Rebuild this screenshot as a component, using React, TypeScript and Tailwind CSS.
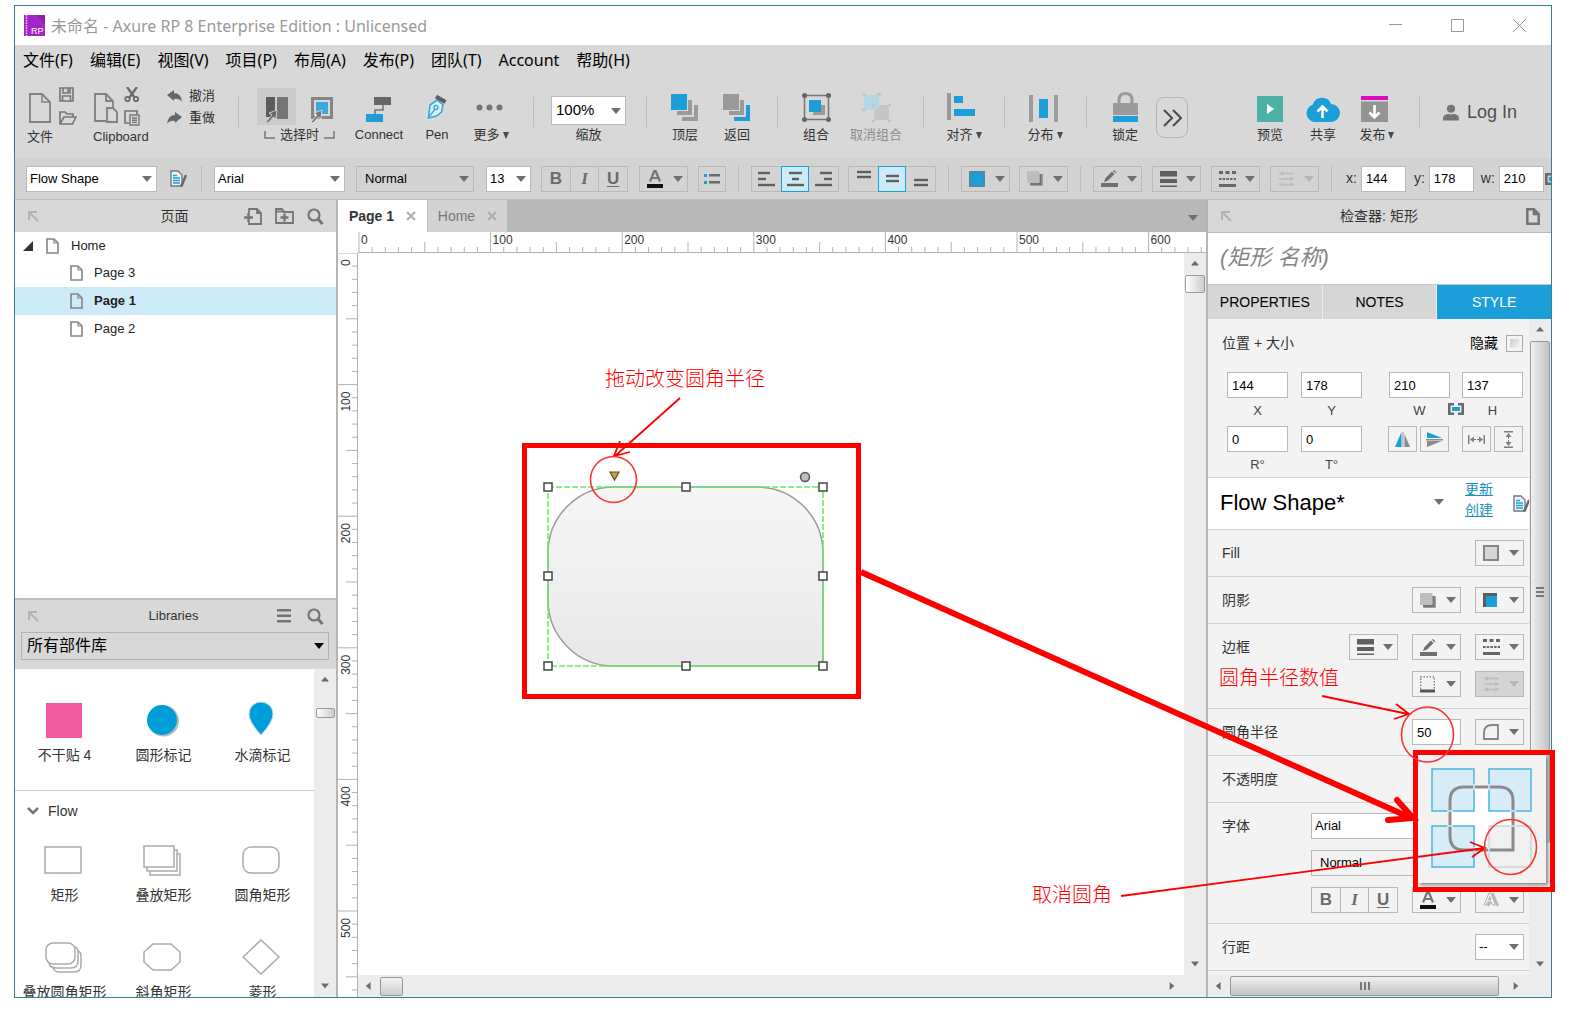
import React from "react";
import clsx from "clsx";

const menus = [
  "文件(F)",
  "编辑(E)",
  "视图(V)",
  "项目(P)",
  "布局(A)",
  "发布(P)",
  "团队(T)",
  "Account",
  "帮助(H)",
];

const pages = [
  { name: "Page 3", active: false },
  { name: "Page 1", active: true },
  { name: "Page 2", active: false },
];

const RULER_STEP = 13.16;

/* ---------- small shared pieces ---------- */

function Caret({ className = "text-[#6f6f6f]" }: { className?: string }) {
  return (
    <svg width="10" height="6" viewBox="0 0 10 6" className={clsx("shrink-0", className)}>
      <path d="M0 0h10L5 6z" fill="currentColor" />
    </svg>
  );
}

function Combo({
  label,
  value,
  className,
  white = true,
  indent = false,
}: {
  label: string;
  value: string;
  className: string;
  white?: boolean;
  indent?: boolean;
}) {
  return (
    <div
      className={clsx(
        "relative flex h-[26px] shrink-0 items-center border border-[#b9b9b9]",
        white ? "bg-white" : "bg-transparent",
        className
      )}
    >
      <select
        aria-label={label}
        className={clsx(
          "h-full w-full appearance-none bg-transparent text-[13px] text-black outline-none",
          indent ? "pl-2" : "pl-[3px]"
        )}
      >
        <option>{value}</option>
      </select>
      <div className="pointer-events-none absolute right-1">
        <Caret />
      </div>
    </div>
  );
}

function DropButton({
  label,
  disabled = false,
  filled = false,
  children,
}: {
  label: string;
  disabled?: boolean;
  filled?: boolean;
  children: React.ReactNode;
}) {
  return (
    <button
      aria-label={label}
      disabled={disabled}
      className={clsx(
        "flex h-[26px] w-[49px] shrink-0 items-center justify-between border border-[#b9b9b9] pr-1 pl-[7px]",
        filled && "bg-[#d5d5d5]"
      )}
    >
      {children}
      <Caret className={disabled ? "text-[#b5b5b5]" : "text-[#6f6f6f]"} />
    </button>
  );
}

function Separator({ className }: { className?: string }) {
  return <div className={clsx("w-px shrink-0 bg-[#bdbdbd]", className)} />;
}

function Tool({
  label,
  icon,
  className,
  muted = false,
  menu = false,
}: {
  label: string;
  icon: React.ReactNode;
  className: string;
  muted?: boolean;
  menu?: boolean;
}) {
  return (
    <button
      className={clsx(
        "flex h-[68px] shrink-0 flex-col items-center justify-end text-[13px] leading-5 whitespace-nowrap",
        muted ? "text-[#8f8f8f]" : "text-[#333]",
        className
      )}
    >
      <span className="mb-[3px] flex h-[30px] items-end">{icon}</span>
      <span className="flex items-center gap-[3px]">
        {label}
        {menu && (
          <svg width="6" height="7" viewBox="0 0 6 7">
            <path d="M0 0h6L3 7z" fill="#4a4a4a" />
          </svg>
        )}
      </span>
    </button>
  );
}

/* ---------- icons ---------- */

function PageIcon({ size = "small" }: { size?: "small" | "large" }) {
  if (size === "large") {
    return (
      <svg width="22" height="30" viewBox="0 0 22 30" fill="none" stroke="#808080" strokeWidth="1.800">
        <path d="M1 1h12l8 8v20H1z" />
        <path d="M13 1v8h8" strokeWidth="1.500" />
      </svg>
    );
  }
  return (
    <svg width="13" height="16" viewBox="0 0 13 16" fill="none" stroke="#858585" strokeWidth="1.600">
      <path d="M1 1h7l4 4v10H1z" />
      <path d="M8 1v4h4" strokeWidth="1.200" />
    </svg>
  );
}

function CollapseIcon() {
  return (
    <svg width="11" height="11" viewBox="0 0 11 11" fill="none" stroke="#b3b3b3" strokeWidth="2">
      <path d="M1 9V1h8M2 2l8 8" />
    </svg>
  );
}

function SearchIcon() {
  return (
    <svg width="17" height="17" viewBox="0 0 17 17" fill="none" stroke="#757575">
      <circle cx="7" cy="7" r="5.500" strokeWidth="2.200" />
      <path d="M11 11l4.500 5" strokeWidth="3" />
    </svg>
  );
}

function StyleIcon() {
  return (
    <svg width="17" height="17" viewBox="0 0 17 17" fill="none" className="shrink-0">
      <path d="M1 1h7l4 4v11H1z" fill="#eef6fa" stroke="#777" strokeWidth="1.400" />
      <path d="M3 5.500h4M3 8h7M3 10.500h7M3 13h7" stroke="#1c9fd9" strokeWidth="1.400" />
      <path d="M16 5l-4 10-1.500 1" stroke="#666" strokeWidth="2.400" />
    </svg>
  );
}

function FontColorIcon() {
  return (
    <svg width="16" height="18" viewBox="0 0 16 18" fill="none">
      <path d="M3 11.500L7.300 1h1.400L13 11.500M4.800 8h6.400" stroke="#757575" strokeWidth="2.200" />
      <path d="M0 14h16v4H0z" fill="#111" />
    </svg>
  );
}

function TextShadowIcon() {
  return (
    <svg width="17" height="16" viewBox="0 0 17 16" fill="none">
      <path d="M5 14L10 3l5 11M7 10h6" stroke="#b5b5b5" strokeWidth="2.600" />
      <path d="M1 13L6 1h2l4.500 12h-3L8.500 10h-4L3.500 13zM5.500 8h2.500L7 4.500z" stroke="#b0b0b0" fill="#f3f3f3" />
    </svg>
  );
}

function PenLineIcon() {
  return (
    <svg width="17" height="17" viewBox="0 0 17 17" fill="#6f6f6f">
      <path d="M0 13h17v4H0zM3 12l1.500-4L11 1.500 13.500 4 7 10.500zM12 .800l1-.800 2.300 2.300-1 1z" />
    </svg>
  );
}

function LineWidthIcon() {
  return (
    <svg width="17" height="16" viewBox="0 0 17 16" fill="#5f5f5f">
      <path d="M0 0h17v5.500H0zM0 8h17v4H0zM0 14.500h17V16H0z" />
    </svg>
  );
}

function LineStyleIcon() {
  return (
    <svg width="17" height="16" viewBox="0 0 17 16" fill="none" stroke="#666">
      <path d="M0 1.500h17" strokeWidth="3" strokeDasharray="4 2.500" />
      <path d="M0 8h17" strokeWidth="2" strokeDasharray="2.500 1.200" />
      <path d="M0 14.500h17" strokeWidth="3" />
    </svg>
  );
}

function ArrowStyleIcon() {
  return (
    <svg width="17" height="16" viewBox="0 0 17 16" fill="none" stroke="#bcbcbc" strokeWidth="1.500">
      <path d="M1 2.500h15M1 8h15M1 13.500h15M4 .500v4M13 6v4M4 11.500v4M13 11.500v4" />
    </svg>
  );
}

function OuterShadowIcon() {
  return (
    <svg width="16" height="15" viewBox="0 0 16 15">
      <rect x="3" y="3" width="13" height="12" rx="1" fill="#9d9d9d" />
      <path d="M13.500 3v10H3" fill="none" stroke="#747474" strokeWidth="2" />
      <rect width="12.500" height="12" rx="1" fill="#bdbdbd" />
    </svg>
  );
}

function InnerShadowIcon() {
  return (
    <svg width="14" height="14" viewBox="0 0 14 14">
      <rect width="14" height="14" fill="#5d5d5d" />
      <rect x="3" y="3" width="11" height="11" fill="#1c9fd9" />
    </svg>
  );
}

function FillIcon({ gray = false }: { gray?: boolean }) {
  return (
    <div
      className={clsx(
        "size-4 border-2",
        gray ? "border-[#858585] bg-[#d6d6d6]" : "border-[#4f88a3] bg-[#1c9fd9]"
      )}
    />
  );
}

function BorderSidesIcon() {
  return (
    <svg width="15" height="17" viewBox="0 0 15 17" fill="none">
      <path d="M.700 13V.800h13.600V13" stroke="#777" strokeWidth="1.300" strokeDasharray="1.500 1.500" />
      <path d="M0 15h15" stroke="#555" strokeWidth="3" />
    </svg>
  );
}

function CornerIcon() {
  return (
    <svg width="16" height="16" viewBox="0 0 16 16" fill="none" stroke="#858585" strokeWidth="1.800">
      <path d="M1 15V9q0-8 8-8h6v14z" />
    </svg>
  );
}

function LinkIcon() {
  return (
    <svg width="16" height="12" viewBox="0 0 16 12" fill="none" className="shrink-0">
      <path d="M6 1.300H1.300v9.400H6M10 1.300h4.700v9.400H10" stroke="#6a6a6a" strokeWidth="2.600" />
      <path d="M4 4h8v4H4z" fill="#1c9fd9" />
    </svg>
  );
}

function AlignIcon({ lines }: { lines: number[][] }) {
  return (
    <svg width="17" height="17" viewBox="0 0 17 17" stroke="#5f5f5f" strokeWidth="2.400">
      {lines.map(([x1, x2, y]) => (
        <path key={y} d={`M${x1} ${y}H${x2}`} />
      ))}
    </svg>
  );
}

function BiuGroup() {
  const cell = "flex flex-1 items-center justify-center text-[17px] text-[#6b6b6b]";
  return (
    <div className="flex h-[26px] w-[87px] shrink-0 divide-x divide-[#b9b9b9] border border-[#b9b9b9]">
      <button className={clsx(cell, "font-bold")}>B</button>
      <button className={clsx(cell, "font-['Liberation_Serif'] font-bold italic")}>I</button>
      <button className={clsx(cell, "font-bold underline underline-offset-2")}>U</button>
    </div>
  );
}

/* ---------- scroll bars ---------- */

function ScrollArrow({ dir }: { dir: "up" | "down" | "left" | "right" }) {
  const shapes = {
    up: "M0 7L5 1l5 6z",
    down: "M0 2h10L5 8z",
    left: "M7 0v10L1 5z",
    right: "M2 0v10l6-5z",
  };
  return (
    <button aria-label={dir} className="flex size-[22px] shrink-0 items-center justify-center">
      <svg width="8" height="8" viewBox="0 0 10 10">
        <path d={shapes[dir]} fill="#6c6c6c" />
      </svg>
    </button>
  );
}

/* ---------- top bars ---------- */

function TitleBar() {
  return (
    <header className="flex h-[39px] shrink-0 items-center bg-white pr-[25px] pl-[9px]">
      <svg width="21" height="21" viewBox="0 0 21 21">
        <rect width="21" height="21" fill="#a326c4" />
        <path d="M2.500 0v21" stroke="#e6c3f0" strokeWidth="1.500" strokeDasharray="1.500 1" />
        <path d="M12 0l9 9V0z" fill="#8d1fad" />
        <text x="7" y="19" fontSize="9" fill="#fff" fontFamily="Liberation Sans">
          RP
        </text>
      </svg>
      <h1 className="ml-[6px] font-['Noto_Sans','Noto_Sans_CJK_SC',sans-serif] text-[16px] text-[#999]">
        未命名 - Axure RP 8 Enterprise Edition : Unlicensed
      </h1>
      <div className="ml-auto flex items-center gap-[49px]">
        <button aria-label="minimize">
          <svg width="13" height="13" stroke="#999">
            <path d="M0 5.500h13" />
          </svg>
        </button>
        <button aria-label="maximize">
          <svg width="13" height="13" fill="none" stroke="#999">
            <path d="M.500 .500h12v12H.500z" />
          </svg>
        </button>
        <button aria-label="close">
          <svg width="13" height="13" stroke="#999">
            <path d="M0 0l13 13M13 0L0 13" />
          </svg>
        </button>
      </div>
    </header>
  );
}

function MenuBar() {
  return (
    <nav className="flex h-8 shrink-0 items-center gap-[17px] pb-[2px] pl-2 font-['Noto_Sans','Noto_Sans_CJK_SC',sans-serif] text-[16px] text-black">
      {menus.map((menu) => (
        <button key={menu}>{menu}</button>
      ))}
    </nav>
  );
}

function Toolbar() {
  return (
    <div className="flex h-[81px] shrink-0 items-start pr-[34px] pl-3 text-[13px] text-[#333]">
      {/* File */}
      <div className="w-[50px] shrink-0 pt-[10px]">
        <div className="flex h-[40px] gap-[8px] pl-[2px]">
          <div className="pt-[6px]">
            <PageIcon size="large" />
          </div>
          <div className="flex flex-col gap-[9px]">
            <svg width="15" height="15" viewBox="0 0 15 15" fill="none" stroke="#757575" strokeWidth="1.600">
              <path d="M1 1h13v13H1zM4 1v5h7V1M3.500 14V9h8v5M9 2v3" />
            </svg>
            <svg width="18" height="14" viewBox="0 0 18 14" fill="none" stroke="#757575" strokeWidth="1.600">
              <path d="M1 13V1h5l2 2h6v3M1 13L5 6h12l-3.500 7z" />
            </svg>
          </div>
        </div>
        <div className="leading-5">文件</div>
      </div>
      {/* Clipboard */}
      <div className="ml-4 w-[58px] shrink-0 pt-[10px]">
        <div className="flex h-[40px] gap-[6px] pl-[1px]">
          <svg
            width="24"
            height="30"
            viewBox="0 0 24 30"
            fill="none"
            stroke="#808080"
            strokeWidth="1.800"
            className="mt-[6px]"
          >
            <path d="M12 28H1V1h11l7 7v7M12 1v7h7" />
            <path d="M13 15h6l4 4v10H13z" />
          </svg>
          <div className="flex flex-col gap-[6px]">
            <svg width="16" height="16" viewBox="0 0 16 16" fill="none" stroke="#6b6b6b">
              <path d="M3 0l8 11M13 0L5 11" strokeWidth="2.400" />
              <circle cx="3.500" cy="12" r="2.200" strokeWidth="1.800" />
              <circle cx="12" cy="12" r="2.200" strokeWidth="1.800" />
            </svg>
            <svg width="16" height="17" viewBox="0 0 16 17" fill="none" stroke="#757575" strokeWidth="1.700">
              <path d="M5 14H1V2h12v3M4 2h6" />
              <path d="M6 6h9v10H6zM8 9h5M8 11.200h5M8 13.400h5" strokeWidth="1.400" />
            </svg>
          </div>
        </div>
        <div className="leading-5">Clipboard</div>
      </div>
      {/* Undo / redo */}
      <div className="ml-4 flex w-[49px] shrink-0 flex-col gap-[2px] pt-[9px]">
        <button className="flex items-center gap-[7px] leading-5 whitespace-nowrap">
          <svg width="15" height="12" viewBox="0 0 15 12" fill="#666">
            <path d="M0 5l7-5v3q7 0 8 9-3-4-8-3v2z" />
          </svg>
          撤消
        </button>
        <button className="flex items-center gap-[7px] leading-5 whitespace-nowrap">
          <svg width="15" height="12" viewBox="0 0 15 12" fill="#666">
            <path d="M15 5L8 0v3Q1 3 0 12q3-4 8-3v2z" />
          </svg>
          重做
        </button>
      </div>
      <Separator className="mt-5 ml-[22px] h-[30px]" />

      {/* Selection mode */}
      <div className="ml-[18px] w-[79px] shrink-0 pt-[11px]">
        <div className="flex">
          <button
            aria-label="intersect"
            className="flex h-[37px] w-[39px] shrink-0 items-end justify-center bg-[#cbcbcb] pb-[2px]"
          >
            <svg width="23" height="26" viewBox="0 0 23 26">
              <path d="M1 0h9v20H1z" fill="#5c5c5c" />
              <path d="M12 0h11v22H12z" fill="#757575" />
              <path d="M1 25l6-7-3-2 8-3-1 9-2.500-2L3 26z" fill="#6a6a6a" stroke="#cbcbcb" />
            </svg>
          </button>
          <button
            aria-label="contain"
            className="ml-[10px] flex h-[37px] w-[30px] shrink-0 items-end justify-center pb-[2px]"
          >
            <svg width="23" height="26" viewBox="0 0 23 26">
              <path d="M2.500 1.500h19v19h-19z" fill="none" stroke="#868686" strokeWidth="3" />
              <path d="M6 5h12v12H6z" fill="#38a9dc" />
              <path d="M1 25l6-7-3-2 8-3-1 9-2.500-2L3 26z" fill="#757575" stroke="#d8d8d8" />
            </svg>
          </button>
        </div>
        <div className="flex items-center gap-[5px] pl-[7px] leading-5 whitespace-nowrap">
          <svg width="11" height="8" fill="none" stroke="#757575" strokeWidth="1.500" className="shrink-0">
            <path d="M1 0v7h10" />
          </svg>
          选择时
          <svg width="11" height="8" fill="none" stroke="#757575" strokeWidth="1.500" className="shrink-0">
            <path d="M10 0v7H0" />
          </svg>
        </div>
      </div>
      <Tool
        className="ml-[18px] w-[50px]"
        label="Connect"
        icon={
          <svg width="26" height="25" viewBox="0 0 26 25">
            <path d="M8 0h17v8H8z" fill="#666" />
            <path d="M0 17h17v8H0z" fill="#1c9fd9" />
            <path d="M17 8v5H9v4" fill="none" stroke="#757575" strokeWidth="1.600" />
          </svg>
        }
      />
      <Tool
        className="ml-[15px] w-9"
        label="Pen"
        icon={
          <svg width="20" height="26" viewBox="0 0 20 26" fill="none" className="mb-[2px]">
            <path d="M1.500 24L3 11l7-5 6 4.500-1.500 7.500-5 4z" fill="#d9eef7" stroke="#38a9dc" strokeWidth="1.600" />
            <path d="M2 23l6-8" stroke="#38a9dc" strokeWidth="1.300" />
            <circle cx="9" cy="13.500" r="2" stroke="#38a9dc" strokeWidth="1.300" />
            <path d="M9 2.500l9.500 5.500" stroke="#5f5f5f" strokeWidth="4" />
          </svg>
        }
      />
      <Tool
        className="ml-[18px] w-9"
        label="更多"
        menu
        icon={
          <svg width="27" height="7" fill="#757575" className="mb-[11px] -ml-1">
            <circle cx="3.500" cy="3.500" r="3" />
            <circle cx="13.500" cy="3.500" r="3" />
            <circle cx="23.500" cy="3.500" r="3" />
          </svg>
        }
      />
      <Separator className="mt-5 ml-6 h-[30px]" />

      <div className="ml-[17px] flex w-[75px] shrink-0 flex-col items-center pt-[19px]">
        <div className="relative flex h-[29px] w-full items-center border border-[#b9b9b9] bg-white">
          <select id="zoom" className="w-full appearance-none bg-transparent pl-1 text-[15px] text-black outline-none">
            <option>100%</option>
          </select>
          <div className="pointer-events-none absolute right-1">
            <Caret />
          </div>
        </div>
        <label htmlFor="zoom" className="leading-5">
          缩放
        </label>
      </div>
      <Separator className="mt-5 ml-5 h-[30px]" />

      <Tool
        className="ml-3 w-[52px]"
        label="顶层"
        icon={
          <svg width="28" height="28" viewBox="0 0 28 28" fill="#9a9a9a">
            <path d="M23 11h4v16H11v-4h12z" />
            <path d="M17 6h4v15H6v-4h11z" />
            <path d="M0 0h16v16H0z" fill="#1c9fd9" />
          </svg>
        }
      />
      <Tool
        className="w-[52px]"
        label="返回"
        icon={
          <svg width="28" height="28" viewBox="0 0 28 28" fill="#9a9a9a">
            <path d="M23 11h4v16H11v-4h12z" fill="#1c9fd9" />
            <path d="M17 6h4v15H6v-4h11z" />
            <path d="M0 0h16v16H0z" />
          </svg>
        }
      />
      <Separator className="mt-5 ml-[14px] h-[30px]" />

      <Tool
        className="ml-3 w-[52px]"
        label="组合"
        icon={
          <svg width="29" height="29" viewBox="0 0 29 29">
            <path d="M13 12h10v10H11z" fill="#9a9a9a" />
            <path d="M7 7h12v12H7z" fill="#1c9fd9" />
            <path d="M2.500 2.500h24v24h-24z" fill="none" stroke="#757575" strokeWidth="1.500" />
            <g fill="#666">
              <circle cx="2.500" cy="2.500" r="2.500" />
              <circle cx="26.500" cy="2.500" r="2.500" />
              <circle cx="2.500" cy="26.500" r="2.500" />
              <circle cx="26.500" cy="26.500" r="2.500" />
            </g>
          </svg>
        }
      />
      <Tool
        className="ml-[4px] w-[60px]"
        label="取消组合"
        muted
        icon={
          <svg width="29" height="29" viewBox="0 0 29 29">
            <path d="M12 12h15v15H12z" fill="#c6c6c6" />
            <path d="M2 2h15v15H2z" fill="#b4d6e5" />
            <path
              d="M0 1h3M15 1h4M0 17h3M15 17h4M10 12h3M26 12h3M10 28h3M26 28h3"
              stroke="#c4c4c4"
              strokeWidth="3"
            />
          </svg>
        }
      />
      <Separator className="mt-5 ml-[17px] h-[30px]" />

      <Tool
        className="ml-[22px] w-9"
        label="对齐"
        menu
        icon={
          <svg width="34" height="29" viewBox="0 0 34 29">
            <path d="M0 0h4v27H0z" fill="#9a9a9a" />
            <path d="M7 3h9v7H7zM7 16h21v7H7z" fill="#1c9fd9" />
          </svg>
        }
      />
      <Separator className="mt-5 ml-[22px] h-[30px]" />
      <Tool
        className="ml-[22px] w-9"
        label="分布"
        menu
        icon={
          <svg width="33" height="27" viewBox="0 0 33 27">
            <path d="M0 0h4v27H0zM25 0h4v27h-4z" fill="#9a9a9a" />
            <path d="M10 4h9v19h-9z" fill="#1c9fd9" />
          </svg>
        }
      />
      <Separator className="mt-5 ml-[23px] h-[30px]" />
      <Tool
        className="ml-5 w-9"
        label="锁定"
        icon={
          <svg width="25" height="30" viewBox="0 0 25 30">
            <path d="M6 12V8q0-6.500 6.500-6.500T19 8v4" fill="none" stroke="#9a9a9a" strokeWidth="3" />
            <path d="M0 11h25v12H0z" fill="#9a9a9a" />
            <path d="M0 24h25v6H0z" fill="#1c9fd9" />
          </svg>
        }
      />
      <button
        aria-label="more tools"
        className="mt-5 ml-[13px] flex h-[41px] w-8 shrink-0 items-center justify-center rounded-lg border border-[#b5b5b5]"
      >
        <svg width="19" height="18" viewBox="0 0 19 18" fill="none" stroke="#4a4a4a" strokeWidth="2">
          <path d="M1 1l8 8-8 8M10 1l8 8-8 8" />
        </svg>
      </button>

      <div className="ml-auto flex">
        <Tool
          className="w-9"
          label="预览"
          icon={
            <svg width="26" height="26" viewBox="0 0 26 26">
              <path d="M0 0h26v26H0z" fill="#4bb0a5" />
              <path d="M10 8l7 5-7 5z" fill="#fff" />
            </svg>
          }
        />
        <Tool
          className="ml-[17px] w-9"
          label="共享"
          icon={
            <svg width="35" height="26" viewBox="0 0 35 26">
              <path d="M9 26a9 9 0 0 1-1-17.500A9.500 9.500 0 0 1 26 8a9 9 0 0 1 0 18z" fill="#1c9fd9" />
              <path d="M17.500 22V11M12.500 15.500l5-5 5 5" fill="none" stroke="#fff" strokeWidth="2.600" />
            </svg>
          }
        />
        <Tool
          className="ml-[18px] w-9"
          label="发布"
          menu
          icon={
            <svg width="31" height="26" viewBox="0 0 31 26">
              <path d="M0 0h27v4H0z" fill="#dc0cc0" />
              <path d="M0 5.500h27V26H0z" fill="#949494" />
              <path d="M13.500 9v12M8.500 16.500l5 5 5-5" fill="none" stroke="#fff" strokeWidth="2.600" />
            </svg>
          }
        />
        <Separator className="mt-5 ml-[24px] h-[30px]" />
        <button className="mt-[23px] ml-[23px] flex h-6 items-center gap-2 text-[18px] whitespace-nowrap text-[#4f4f4f]">
          <svg width="16" height="17" viewBox="0 0 17 17" fill="#757575">
            <circle cx="8.500" cy="4.500" r="4.300" />
            <path d="M0 17v-3q1-4 6-4 2.500 1 5 0 5 0 6 4v3z" />
          </svg>
          Log In
        </button>
      </div>
    </div>
  );
}

const hAlign = [
  [[0, 12, 3], [0, 8, 9], [0, 17, 15]],
  [[2, 15, 3], [5, 12, 9], [0, 17, 15]],
  [[5, 17, 3], [9, 17, 9], [0, 17, 15]],
];
const vAlign = [
  [[2, 16, 2], [2, 16, 7]],
  [[2, 15, 6], [2, 15, 11]],
  [[2, 16, 10], [2, 16, 15]],
];

function AlignGroup({ label, items }: { label: string; items: number[][][] }) {
  return (
    <div role="group" aria-label={label} className="flex h-[26px] w-[88px] shrink-0 border border-[#b9b9b9]">
      {items.map((lines, index) => (
        <button
          key={index}
          aria-label={`${label} ${index + 1}`}
          className={clsx(
            "-my-px flex flex-1 items-center justify-center border",
            index === 1 ? "border-[#1c9fd9] bg-[#cceaf7]" : "border-transparent"
          )}
        >
          <AlignIcon lines={lines} />
        </button>
      ))}
    </div>
  );
}

function Coord({ id, value, className }: { id: string; value: string; className: string }) {
  return (
    <div className={clsx("flex shrink-0 items-center gap-1 text-[14px]", className)}>
      <label htmlFor={`bar-${id}`}>{id}:</label>
      <input
        id={`bar-${id}`}
        defaultValue={value}
        className="h-[26px] w-[45px] border border-[#b9b9b9] bg-white pl-1 text-[13px] text-black"
      />
    </div>
  );
}

function FormatBar() {
  return (
    <div className="flex h-[41px] shrink-0 items-center overflow-hidden bg-[#d3d3d3] pl-[11px] text-[#333]">
      <Combo label="widget style" value="Flow Shape" className="w-[131px]" />
      <button aria-label="style manager" className="ml-[13px]">
        <StyleIcon />
      </button>
      <Separator className="ml-[14px] h-[26px]" />
      <Combo label="font" value="Arial" className="ml-[12px] w-[131px]" />
      <Combo label="font weight" value="Normal" className="ml-[11px] w-[118px]" white={false} indent />
      <Combo label="font size" value="13" className="ml-3 w-[45px]" />
      <div className="ml-[10px]">
        <BiuGroup />
      </div>
      <div className="ml-[11px]">
        <DropButton label="font color">
          <FontColorIcon />
        </DropButton>
      </div>
      <button
        aria-label="bullets"
        className="ml-[10px] flex h-[26px] w-[28px] shrink-0 items-center justify-center border border-[#b9b9b9]"
      >
        <svg width="16" height="12" viewBox="0 0 16 12">
          <path d="M0 1h3v3H0zM0 8h3v3H0z" fill="#1c9fd9" />
          <path d="M5 1h11v2.500H5zM5 8h11v2.500H5z" fill="#6b6b6b" />
        </svg>
      </button>
      <Separator className="ml-3 h-[26px]" />
      <div className="ml-3 flex gap-[9px]">
        <AlignGroup label="horizontal align" items={hAlign} />
        <AlignGroup label="vertical align" items={vAlign} />
      </div>
      <Separator className="ml-3 h-[26px]" />
      <div className="ml-3 flex gap-[9px]">
        <DropButton label="fill color">
          <FillIcon />
        </DropButton>
        <DropButton label="shadow">
          <OuterShadowIcon />
        </DropButton>
      </div>
      <Separator className="ml-3 h-[26px]" />
      <div className="ml-3 flex gap-[10px]">
        <DropButton label="line color">
          <PenLineIcon />
        </DropButton>
        <DropButton label="line width">
          <LineWidthIcon />
        </DropButton>
        <DropButton label="line style">
          <LineStyleIcon />
        </DropButton>
        <DropButton label="arrow style" disabled>
          <ArrowStyleIcon />
        </DropButton>
      </div>
      <Separator className="ml-3 h-[26px]" />
      <Coord id="x" value="144" className="ml-[14px]" />
      <Coord id="y" value="178" className="ml-2" />
      <Coord id="w" value="210" className="ml-[7px]" />
      <div className="ml-px">
        <LinkIcon />
      </div>
    </div>
  );
}

/* ---------- left side ---------- */

function PagesPanel() {
  return (
    <section className="flex h-[398px] shrink-0 flex-col bg-white">
      <div className="flex h-8 shrink-0 items-center bg-[#d8d8d8] pr-3 pl-[13px]">
        <CollapseIcon />
        <h2 className="flex-1 pl-[66px] text-center text-[14px]">页面</h2>
        <div className="flex items-center gap-[13px]">
          <svg width="18" height="17" viewBox="0 0 18 17" fill="none" stroke="#757575" strokeWidth="1.800">
            <path d="M5 5V1h8l4 4v11H5v-2M13 1v4h4" />
            <path d="M0 9.500h9M4.500 5v9" strokeWidth="2.500" />
          </svg>
          <svg width="19" height="16" viewBox="0 0 19 16" fill="none" stroke="#757575" strokeWidth="1.800">
            <path d="M1 15V1h6l2 3h9v11z" />
            <path d="M1 3.500h8" />
            <path d="M5.500 9.500h8M9.500 5.500v8" strokeWidth="2.500" />
          </svg>
          <SearchIcon />
        </div>
      </div>
      <ul className="text-[13px] text-[#222]">
        <li className="flex h-[27px] items-center pl-2">
          <svg width="10" height="10">
            <path d="M10 0v10H0z" fill="#333" />
          </svg>
          <span className="mr-3 ml-[13px]">
            <PageIcon />
          </span>
          Home
        </li>
        {pages.map((page) => (
          <li
            key={page.name}
            className={clsx(
              "flex h-7 items-center gap-[11px] pl-[55px]",
              page.active && "bg-[#cceaf7] font-bold"
            )}
          >
            <PageIcon />
            {page.name}
          </li>
        ))}
      </ul>
    </section>
  );
}

const outline = { fill: "none", stroke: "#ababab", strokeWidth: 1.5 };

const markers = [
  {
    name: "不干贴 4",
    icon: (
      <svg width="38" height="36">
        <path d="M0 1h36v35H0z" fill="#f05a9f" />
      </svg>
    ),
  },
  {
    name: "圆形标记",
    icon: (
      <svg width="36" height="36">
        <circle cx="17.500" cy="19" r="15.500" fill="#bbb" />
        <circle cx="16" cy="18" r="15" fill="#009ddb" />
      </svg>
    ),
  },
  {
    name: "水滴标记",
    icon: (
      <svg width="30" height="36">
        <path d="M13 33Q1 20 1 12a12 12 0 0 1 24 0q0 8-12 21z" fill="#009ddb" stroke="#b9dcea" />
      </svg>
    ),
  },
];

const flowShapes = [
  {
    name: "矩形",
    icon: (
      <svg width="41" height="36" {...outline}>
        <path d="M1 5h36v26H1z" />
      </svg>
    ),
  },
  {
    name: "叠放矩形",
    icon: (
      <svg width="41" height="36" {...outline}>
        <path d="M1 4h30v21H1zM4 25v4h30V8h-3M7 29v4h30V12h-3" />
      </svg>
    ),
  },
  {
    name: "圆角矩形",
    icon: (
      <svg width="41" height="36" {...outline}>
        <rect x="1" y="5" width="36" height="26" rx="8" />
      </svg>
    ),
  },
  {
    name: "叠放圆角矩形",
    icon: (
      <svg width="41" height="36" {...outline}>
        <rect x="2" y="4" width="29" height="21" rx="7" />
        <path d="M5 24q1 5 7 5h15q7 0 7-7v-9q0-4-3-5M9 29q2 4 6 4h15q7 0 7-7v-9q0-4-3-5" />
      </svg>
    ),
  },
  {
    name: "斜角矩形",
    icon: (
      <svg width="41" height="36" {...outline}>
        <path d="M10 5h18l9 8v10l-9 8H10l-9-8V13z" />
      </svg>
    ),
  },
  {
    name: "菱形",
    icon: (
      <svg width="41" height="36" {...outline}>
        <path d="M19 1l18 17-18 17L1 18z" />
      </svg>
    ),
  },
];

function WidgetCell({ name, icon }: { name: string; icon: React.ReactNode }) {
  return (
    <div className="flex h-[97px] flex-col items-center pt-[11px]">
      {icon}
      <span className="mt-[7px] text-[14px] leading-5 whitespace-nowrap text-[#333]">{name}</span>
    </div>
  );
}

function LibrariesPanel() {
  return (
    <section className="flex min-h-0 flex-1 flex-col border-t-2 border-[#bdbdbd] bg-white">
      <div className="shrink-0 bg-[#d8d8d8] pb-[9px]">
        <div className="flex h-8 items-center pr-3 pl-[13px]">
          <CollapseIcon />
          <h2 className="flex-1 pl-[31px] text-center text-[13px]">Libraries</h2>
          <div className="flex items-center gap-[16px]">
            <svg width="14" height="14" fill="#757575">
              <path d="M0 0h14v2.500H0zM0 5.500h14V8H0zM0 11h14v2.500H0z" />
            </svg>
            <SearchIcon />
          </div>
        </div>
        <div className="relative mr-[7px] ml-[6px] flex h-[28px] items-center border border-[#b3b3b3]">
          <select
            aria-label="library"
            className="h-full w-full appearance-none bg-transparent pl-[5px] text-[16px] text-black outline-none"
          >
            <option>所有部件库</option>
          </select>
          <div className="pointer-events-none absolute right-1">
            <Caret className="text-black" />
          </div>
        </div>
      </div>
      <div className="flex min-h-0 flex-1">
        <div className="min-w-0 flex-1 overflow-hidden">
          <div className="grid h-[122px] grid-cols-3 border-b border-[#ccc] pt-[22px] pr-[2px]">
            {markers.map((item) => (
              <WidgetCell key={item.name} {...item} />
            ))}
          </div>
          <div className="flex h-10 items-center gap-[9px] pl-3 text-[14px] text-[#333]">
            <svg width="12" height="8" viewBox="0 0 12 8" fill="none" stroke="#777" strokeWidth="2.500">
              <path d="M1 1l5 5 5-5" />
            </svg>
            Flow
          </div>
          <div className="grid grid-cols-3 pr-[2px]">
            {flowShapes.map((item) => (
              <WidgetCell key={item.name} {...item} />
            ))}
          </div>
        </div>
        <div className="flex w-[22px] shrink-0 flex-col items-center bg-[#ececec]">
          <ScrollArrow dir="up" />
          <div className="mt-[17px] h-[10px] w-[19px] rounded-xs border border-[#999] bg-linear-to-r from-white to-[#ccc]" />
          <div className="mt-auto">
            <ScrollArrow dir="down" />
          </div>
        </div>
      </div>
    </section>
  );
}

/* ---------- canvas ---------- */

function HorizontalRuler() {
  return (
    <svg className="h-full w-full" stroke="#b3b3b3">
      {Array.from({ length: 70 }, (_, i) => {
        const x = 1 + i * RULER_STEP;
        const top = i % 10 === 0 ? 0 : i % 5 === 0 ? 10 : 15;
        return (
          <g key={i}>
            <path d={`M${x} ${top}V20`} />
            {i % 10 === 0 && (
              <text x={x + 2} y="12" fontSize="12" fill="#333" stroke="none">
                {i * 10}
              </text>
            )}
          </g>
        );
      })}
    </svg>
  );
}

function VerticalRuler() {
  return (
    <svg className="h-full w-full" stroke="#b3b3b3">
      {Array.from({ length: 60 }, (_, i) => {
        const y = i * RULER_STEP;
        const left = i % 10 === 0 ? 0 : i % 5 === 0 ? 8 : 14;
        const width = String(i * 10).length * 7;
        return (
          <g key={i}>
            <path d={`M${left} ${y}H19`} />
            {i % 10 === 0 && (
              <text
                transform={`translate(12 ${y + 6 + width}) rotate(-90)`}
                fontSize="12"
                fill="#333"
                stroke="none"
              >
                {i * 10}
              </text>
            )}
          </g>
        );
      })}
    </svg>
  );
}

const handles = [
  [6, 21],
  [144, 21],
  [281, 21],
  [6, 110],
  [281, 110],
  [6, 200],
  [144, 200],
  [281, 200],
];

function SelectedShape() {
  return (
    <svg width="288" height="208" viewBox="0 0 288 208" className="absolute top-[213px] left-[184px]" fill="none">
      <defs>
        <linearGradient id="shape-fill" x1="0" y1="0" x2="0" y2="1">
          <stop offset="0" stopColor="#f6f6f6" />
          <stop offset="1" stopColor="#e8e8e8" />
        </linearGradient>
      </defs>
      <path
        d="M6 87a66 66 0 0 1 66-66h143a66 66 0 0 1 66 66v113H72a66 66 0 0 1-66-66z"
        fill="url(#shape-fill)"
        stroke="#9b9b9b"
        strokeWidth="1.500"
      />
      <path d="M6 21h275v179H6z" stroke="#5cf05c" strokeWidth="1.500" strokeDasharray="6 2" />
      {handles.map(([x, y]) => (
        <rect key={`${x}-${y}`} x={x - 4} y={y - 4} width="8" height="8" fill="#fff" stroke="#444" strokeWidth="1.500" />
      ))}
      <path d="M68 6h9l-4.500 8z" fill="#d3a52b" stroke="#5a5030" strokeWidth="1.200" />
      <circle cx="263" cy="11" r="4.500" fill="#bdbdbd" stroke="#555" strokeWidth="1.500" />
    </svg>
  );
}

function CloseMark() {
  return (
    <svg width="10" height="10" viewBox="0 0 10 10" stroke="#b0b0b0" strokeWidth="2.200">
      <path d="M1 1l8 8M9 1L1 9" />
    </svg>
  );
}

function Canvas() {
  return (
    <main className="flex min-w-0 flex-1 flex-col bg-white">
      <div className="flex h-8 shrink-0 bg-[#b8b8b8] text-[14px]">
        <button className="flex w-[89px] items-center justify-center gap-3 bg-white font-bold whitespace-nowrap text-[#333]">
          Page 1
          <CloseMark />
        </button>
        <button className="flex w-20 items-center justify-center gap-3 border-l border-[#c4c4c4] bg-[#d3d3d3] text-[#777]">
          Home
          <CloseMark />
        </button>
        <button aria-label="open tabs" className="mr-2 ml-auto pt-1">
          <Caret />
        </button>
      </div>
      <div className="flex min-h-0 flex-1">
        <div className="flex w-5 shrink-0 flex-col">
          <div className="h-[21px] shrink-0" />
          <div className="min-h-0 flex-1 border-r border-[#b3b3b3]">
            <VerticalRuler />
          </div>
        </div>
        <div className="flex min-w-0 flex-1 flex-col">
          <div className="h-[21px] shrink-0 border-b border-[#b3b3b3]">
            <HorizontalRuler />
          </div>
          <div className="flex min-h-0 flex-1">
            <div className="relative min-w-0 flex-1 overflow-hidden">
              <SelectedShape />
            </div>
            <div className="flex w-[22px] shrink-0 flex-col items-center bg-[#ececec]">
              <ScrollArrow dir="up" />
              <div className="h-[18px] w-5 rounded-xs border border-[#999] bg-linear-to-r from-white to-[#ccc]" />
              <div className="mt-auto">
                <ScrollArrow dir="down" />
              </div>
            </div>
          </div>
          <div className="flex h-[22px] shrink-0 items-center bg-[#ececec] pr-[23px]">
            <ScrollArrow dir="left" />
            <div className="h-[19px] w-[23px] rounded-xs border border-[#999] bg-linear-to-b from-[#f4f4f4] to-[#ccc]" />
            <div className="ml-auto">
              <ScrollArrow dir="right" />
            </div>
          </div>
        </div>
      </div>
    </main>
  );
}

/* ---------- inspector ---------- */

function NumberField({ id, label, value }: { id: string; label: string; value: string }) {
  return (
    <div className="flex w-[61px] flex-col items-center text-[13px] text-[#444]">
      <input
        id={id}
        defaultValue={value}
        className="h-[26px] w-full border border-[#b9b9b9] bg-white pl-1 text-[13px] text-black"
      />
      <label htmlFor={id} className="h-7 leading-[26px]">
        {label}
      </label>
    </div>
  );
}

function SquareButton({ label, children }: { label: string; children: React.ReactNode }) {
  return (
    <button aria-label={label} className="flex h-[26px] w-[29px] items-center justify-center border border-[#b9b9b9]">
      {children}
    </button>
  );
}

function Row({ label, className, children }: { label: string; className?: string; children?: React.ReactNode }) {
  return (
    <div
      className={clsx(
        "flex shrink-0 items-start justify-between border-t border-[#d2d2d2] pt-[10px] pr-[5px] pl-[14px]",
        className ?? "h-[47px]"
      )}
    >
      <span className="text-[14px] leading-[26px] text-[#333]">{label}</span>
      {children}
    </div>
  );
}

function Inspector() {
  return (
    <aside className="flex w-[345px] shrink-0 flex-col border-l-2 border-[#b5b5b5] bg-[#f3f3f3]">
      <div className="flex h-[33px] shrink-0 items-center border-b border-[#b9b9b9] bg-[#d8d8d8] pr-[11px] pl-[13px]">
        <CollapseIcon />
        <h2 className="flex-1 text-center text-[14px] text-[#333]">检查器: 矩形</h2>
        <svg width="14" height="17" viewBox="0 0 14 17" fill="none" stroke="#757575" strokeWidth="2.500">
          <path d="M1.300 1.300H8l4.700 4.700v9.700H1.300zM8 1v5h5" />
        </svg>
      </div>
      <input
        aria-label="widget name"
        placeholder="(矩形 名称)"
        className="h-[51px] w-full shrink-0 bg-white pb-[2px] pl-3 text-[22px] italic outline-none placeholder:text-[#858585]"
      />
      <div className="grid h-[35px] shrink-0 grid-cols-3 gap-px border-t border-[#c4c4c4] bg-[#eee] text-[14px]">
        <button className="bg-[#d6d6d6]">PROPERTIES</button>
        <button className="bg-[#d6d6d6]">NOTES</button>
        <button className="bg-[#1c9fd9] text-white">STYLE</button>
      </div>
      <div className="flex min-h-0 flex-1">
        <div className="flex min-w-0 flex-1 flex-col overflow-hidden">
          <div className="h-[158px] shrink-0 pt-[14px] pr-[6px] pl-[14px]">
            <div className="flex h-5 items-center justify-between text-[14px] text-[#333]">
              <span>位置 + 大小</span>
              <label className="flex items-center gap-2 text-black">
                隐藏
                <input
                  type="checkbox"
                  className="size-[17px] appearance-none border border-[#aaa] bg-linear-to-br from-[#b9c1ca] to-white shadow-[inset_0_0_0_3px_#f3f3f3]"
                />
              </label>
            </div>
            <div className="mt-[19px] flex pl-[5px]">
              <div className="flex gap-[13px]">
                <NumberField id="pos-x" label="X" value="144" />
                <NumberField id="pos-y" label="Y" value="178" />
              </div>
              <div className="ml-auto flex">
                <NumberField id="size-w" label="W" value="210" />
                <button aria-label="keep ratio" className="-mx-[2px] mt-[31px] h-3">
                  <LinkIcon />
                </button>
                <NumberField id="size-h" label="H" value="137" />
              </div>
            </div>
            <div className="flex pl-[5px]">
              <div className="flex gap-[13px]">
                <NumberField id="rotate" label="R°" value="0" />
                <NumberField id="text-rotate" label="T°" value="0" />
              </div>
              <div className="ml-auto flex gap-[13px]">
                <div className="flex gap-[3px]">
                  <SquareButton label="flip horizontal">
                    <svg width="16" height="15">
                      <path d="M6.500 0v15H0z" fill="#1c9fd9" />
                      <path d="M9.500 2v13H15z" fill="#8a8a8a" />
                      <path d="M8 0v15" stroke="#999" />
                    </svg>
                  </SquareButton>
                  <SquareButton label="flip vertical">
                    <svg width="17" height="15">
                      <path d="M1 0v6h15z" fill="#1c9fd9" />
                      <path d="M1 9v6l15-6zM0 7h17v1.500H0z" fill="#8a8a8a" />
                    </svg>
                  </SquareButton>
                </div>
                <div className="flex gap-[3px]">
                  <SquareButton label="fit width">
                    <svg width="17" height="9" fill="#7d7d7d">
                      <path d="M0 0h1.500v9H0zM15.500 0H17v9h-1.500zM2 4.500L6 1.500v6zM15 4.500l-4-3v6zM6 4h2v1H6zM9 4h2v1H9z" />
                    </svg>
                  </SquareButton>
                  <SquareButton label="fit height">
                    <svg width="9" height="17" fill="#7d7d7d">
                      <path d="M0 0h9v1.500H0zM0 15.500h9V17H0zM4.500 2l3 4h-6zM4.500 15l3-4h-6zM4 6h1v2H4zM4 9h1v2H4z" />
                    </svg>
                  </SquareButton>
                </div>
              </div>
            </div>
          </div>

          <div className="flex h-[52px] shrink-0 items-center border-t border-[#d2d2d2] bg-white pl-3">
            <div className="relative flex w-[224px] shrink-0 items-center pb-[3px]">
              <select
                aria-label="style name"
                className="w-full appearance-none bg-transparent text-[22px] text-black outline-none"
              >
                <option>Flow Shape*</option>
              </select>
              <div className="pointer-events-none absolute right-0">
                <Caret />
              </div>
            </div>
            <div className="ml-[21px] flex shrink-0 flex-col pb-[7px] text-[14px] leading-[21px] whitespace-nowrap text-[#1c8fc0] underline">
              <a href="#update">更新</a>
              <a href="#create">创建</a>
            </div>
            <button aria-label="style manager" className="ml-5 shrink-0">
              <StyleIcon />
            </button>
          </div>

          <Row label="Fill">
            <DropButton label="fill">
              <FillIcon gray />
            </DropButton>
          </Row>
          <Row label="阴影">
            <div className="flex gap-[14px]">
              <DropButton label="outer shadow">
                <OuterShadowIcon />
              </DropButton>
              <DropButton label="inner shadow">
                <InnerShadowIcon />
              </DropButton>
            </div>
          </Row>
          <Row label="边框" className="h-[85px]">
            <div className="flex w-[175px] flex-wrap justify-end gap-x-[14px] gap-y-[11px]">
              <DropButton label="border width">
                <LineWidthIcon />
              </DropButton>
              <DropButton label="border color">
                <PenLineIcon />
              </DropButton>
              <DropButton label="border style">
                <LineStyleIcon />
              </DropButton>
              <DropButton label="border sides">
                <BorderSidesIcon />
              </DropButton>
              <DropButton label="border arrows" disabled filled>
                <ArrowStyleIcon />
              </DropButton>
            </div>
          </Row>
          <Row label="圆角半径">
            <div className="flex gap-[14px]">
              <input
                aria-label="corner radius"
                defaultValue="50"
                className="h-[26px] w-[49px] border border-[#b9b9b9] bg-white pl-1 text-[13px] text-black"
              />
              <DropButton label="corner visibility">
                <CornerIcon />
              </DropButton>
            </div>
          </Row>
          <Row label="不透明度" />
          <Row label="字体" className="h-[121px]">
            <div className="flex w-[213px] flex-col gap-[11px]">
              <Combo label="font family" value="Arial" className="w-full" />
              <Combo label="typeface" value="Normal" className="w-full" white={false} indent />
              <div className="flex justify-between">
                <BiuGroup />
                <div className="flex gap-[14px]">
                  <DropButton label="text color">
                    <FontColorIcon />
                  </DropButton>
                  <DropButton label="text shadow">
                    <TextShadowIcon />
                  </DropButton>
                </div>
              </div>
            </div>
          </Row>
          <Row label="行距">
            <Combo label="line spacing" value="--" className="w-[49px]" />
          </Row>
          <div className="flex-1 border-t border-[#d2d2d2]" />
          <div className="flex h-[22px] shrink-0 items-center bg-[#ececec]">
            <ScrollArrow dir="left" />
            <div className="flex h-5 flex-1 items-center justify-center gap-[2px] rounded-xs border border-[#999] bg-linear-to-b from-[#f0f0f0] to-[#c2c2c2]">
              <div className="h-2 w-[2px] bg-[#777]" />
              <div className="h-2 w-[2px] bg-[#777]" />
              <div className="h-2 w-[2px] bg-[#777]" />
            </div>
            <div className="pr-[2px] pl-[6px]">
              <ScrollArrow dir="right" />
            </div>
          </div>
        </div>
        <div className="flex w-[22px] shrink-0 flex-col items-center bg-[#ececec] pb-[22px]">
          <ScrollArrow dir="up" />
          <div className="flex h-[502px] w-5 flex-col items-center justify-center gap-[2px] rounded-xs border border-[#999] bg-linear-to-r from-[#f0f0f0] to-[#c2c2c2]">
            <div className="h-[2px] w-2 bg-[#777]" />
            <div className="h-[2px] w-2 bg-[#777]" />
            <div className="h-[2px] w-2 bg-[#777]" />
          </div>
          <div className="mt-auto">
            <ScrollArrow dir="down" />
          </div>
        </div>
      </div>
    </aside>
  );
}

/* ---------- notes drawn over the window ---------- */

function CornerPicker() {
  return (
    <div className="absolute top-[750px] left-[1413px] size-[142px] border-5 border-[#f00]">
      <div className="h-[128px] w-[128px] bg-[#f2f2f2] shadow-[2px_2px_3px_#888]">
        <svg width="128" height="128" viewBox="0 0 128 128" fill="none">
          <path d="M33 33h61v61H33z" fill="#fff" />
          <g fill="#d6edf7" stroke="#4db5e0" strokeWidth="1.500">
            <path d="M14 14h42v42H14zM71 14h42v42H71zM14 71h42v41H14z" />
          </g>
          <path d="M71 71h42v41H71z" fill="#f0f0f0" stroke="#d2d2d2" strokeWidth="1.500" />
          <path d="M32 46q0-14 14-14h35q14 0 14 14v49H46q-14 0-14-14z" stroke="#8b8b8b" strokeWidth="3" />
          <path d="M56 29v6M71 29v6M56 92v6M71 92v6M29 56h6M29 71h6M92 56h6M92 71h6" stroke="#dfeef5" strokeWidth="1.500" />
        </svg>
      </div>
    </div>
  );
}

function Annotations() {
  const note =
    "absolute font-['Noto_Sans_CJK_SC',sans-serif] text-[20px] leading-6 font-light whitespace-nowrap text-[#f00]";
  return (
    <div className="pointer-events-none absolute inset-0">
      <CornerPicker />
      <svg className="absolute inset-0 h-full w-full" fill="none" stroke="#f00">
        <path d="M524.500 445.500h334v251h-334z" strokeWidth="5" />
        <path d="M861 572l550 246" strokeWidth="6" />
        <path d="M1397 800l16 18-25 2" strokeWidth="6" strokeLinecap="round" />
        <g strokeWidth="1.800">
          <path d="M680 398l-65 58M620 441l-6 15 16-4" />
          <path d="M1322 696l86 18M1396 704l13 10-15 5" />
          <path d="M1121 896l364-48M1470 842l15 6-13 9" />
        </g>
        <g stroke="#ff3030" strokeWidth="1.600">
          <circle cx="613.500" cy="479.500" r="23" />
          <ellipse cx="1427.500" cy="734.500" rx="26" ry="27.500" />
          <ellipse cx="1510.500" cy="847" rx="26" ry="27.500" />
        </g>
      </svg>
      <span className={clsx(note, "top-[366px] left-[605px]")}>拖动改变圆角半径</span>
      <span className={clsx(note, "top-[665px] left-[1219px]")}>圆角半径数值</span>
      <span className={clsx(note, "top-[882px] left-[1032px]")}>取消圆角</span>
    </div>
  );
}

export default function App() {
  return (
    <div className="relative h-screen overflow-hidden bg-white pt-[5px] pr-[18px] pb-[19px] pl-[14px] font-['Liberation_Sans','Noto_Sans_CJK_SC',sans-serif]">
      <div className="flex h-full flex-col border border-[#3b7f8c] bg-[#d8d8d8]">
        <TitleBar />
        <MenuBar />
        <Toolbar />
        <FormatBar />
        <div className="flex min-h-0 flex-1 border-t border-[#bdbdbd]">
          <aside className="flex w-[323px] shrink-0 flex-col border-r-2 border-[#b5b5b5] text-[#333]">
            <PagesPanel />
            <LibrariesPanel />
          </aside>
          <Canvas />
          <Inspector />
        </div>
      </div>
      <Annotations />
    </div>
  );
}
